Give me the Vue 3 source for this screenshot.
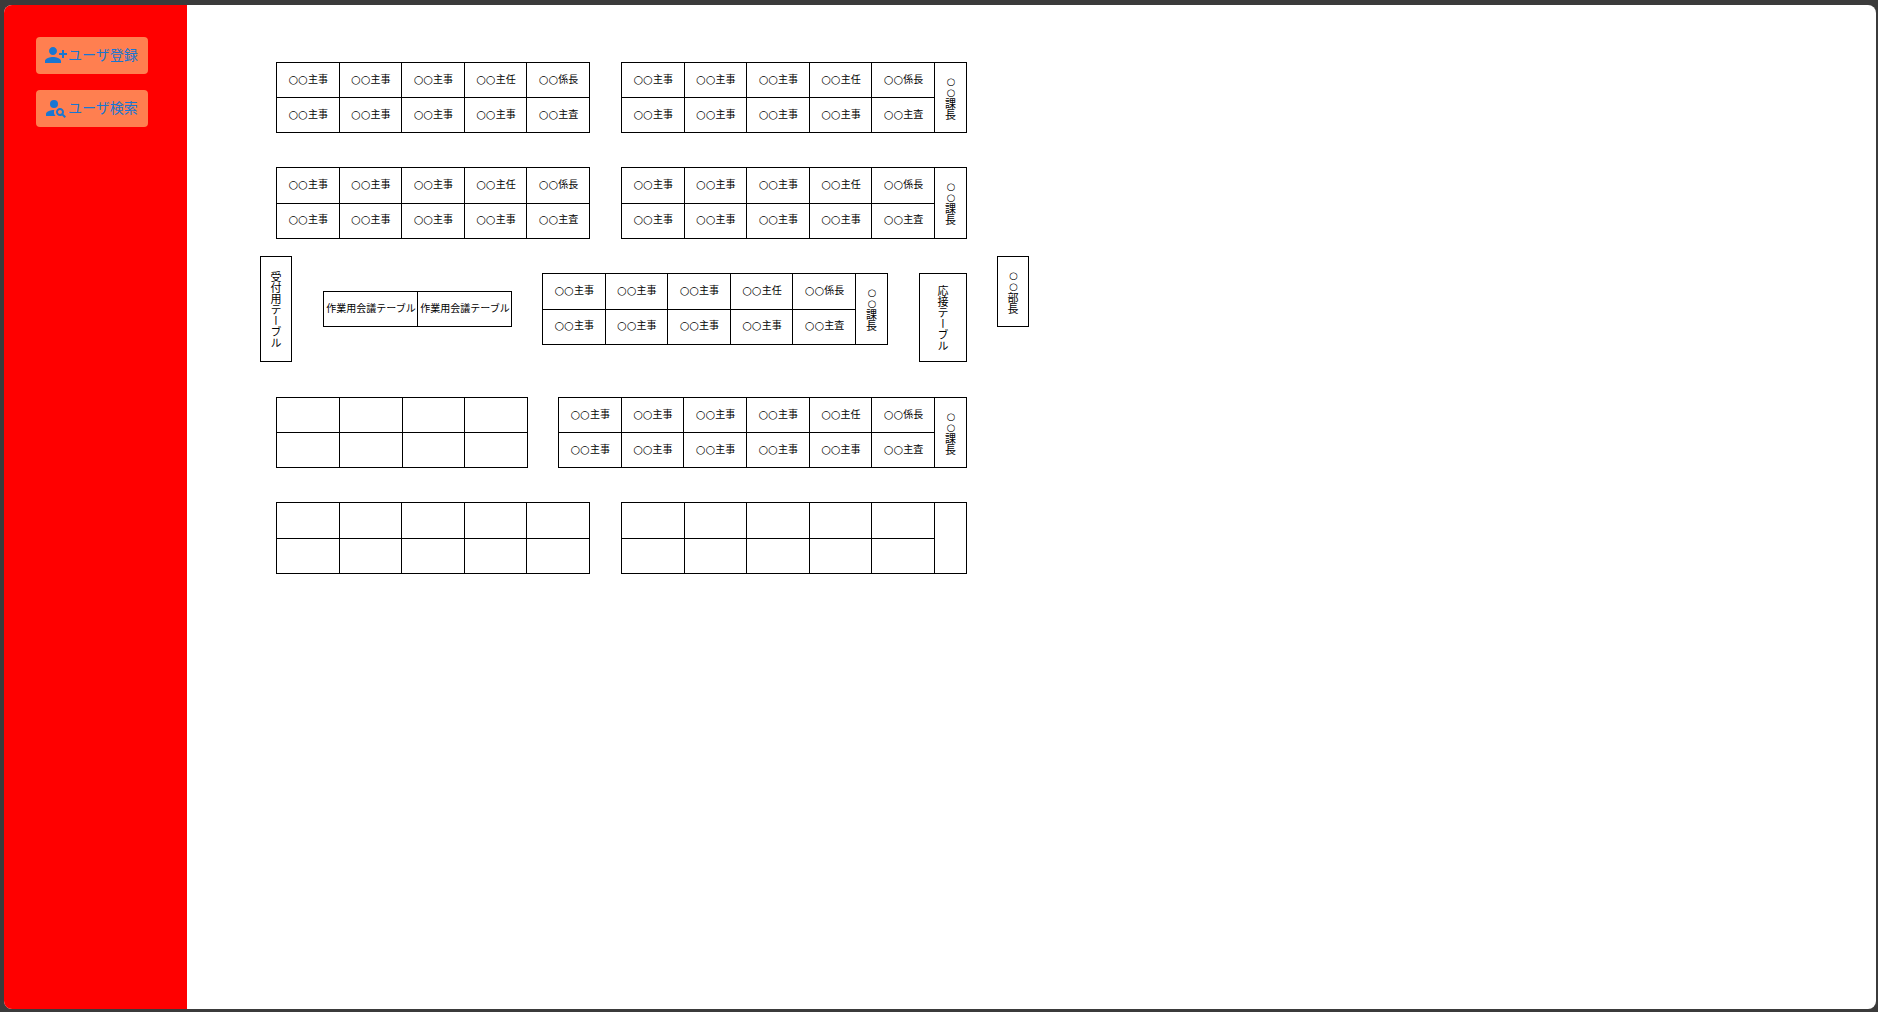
<script setup>
const row = (chief, others) => [...Array(others).fill('○○主事'), ...chief]
const team = (plain) => [
  ...row(['○○主任', '○○係長'], plain),
  ...row(['○○主事', '○○主査'], plain),
]
const blank = (n) => Array(n).fill('')

// x, y, w, h: placement on the floor canvas; cols: desk columns; head: desk at the end of the island
const islands = [
  { x: 89, y: 57, w: 314, h: 71, cols: 5, desks: team(3) },
  { x: 434, y: 57, w: 346, h: 71, cols: 5, desks: team(3), head: '○○課長' },
  { x: 89, y: 162, w: 314, h: 72, cols: 5, desks: team(3) },
  { x: 434, y: 162, w: 346, h: 72, cols: 5, desks: team(3), head: '○○課長' },
  { x: 73, y: 251, w: 32, h: 106, cols: 0, desks: [], head: '受付用テーブル' },
  { x: 136, y: 286, w: 189, h: 36, cols: 2, desks: ['作業用会議テーブル', '作業用会議テーブル'] },
  { x: 355, y: 268, w: 346, h: 72, cols: 5, desks: team(3), head: '○○課長' },
  { x: 732, y: 268, w: 48, h: 89, cols: 0, desks: [], head: '応接テーブル' },
  { x: 810, y: 251, w: 32, h: 71, cols: 0, desks: [], head: '○○部長' },
  { x: 89, y: 392, w: 252, h: 71, cols: 4, desks: blank(8) },
  { x: 371, y: 392, w: 409, h: 71, cols: 6, desks: team(4), head: '○○課長' },
  { x: 89, y: 497, w: 314, h: 72, cols: 5, desks: blank(10) },
  { x: 434, y: 497, w: 346, h: 72, cols: 5, desks: blank(10), head: '' },
]

const place = (i) => ({
  left: `${i.x}px`,
  top: `${i.y}px`,
  width: `${i.w}px`,
  height: `${i.h}px`,
})
const deskArea = (i) => ({
  gridTemplateColumns: `repeat(${i.cols}, 1fr)`,
})

// A label is an anonymised name (the rings) followed by the job title
const rings = (label) => label.match(/^○*/)[0]
const title = (label) => label.replace(/^○*/, '')
</script>

<template>
  <div class="frame">
    <div class="window">
      <nav class="sidebar">
        <button type="button" class="action">
          <svg class="icon" viewBox="0 0 24 24" aria-hidden="true">
            <path d="M13 8c0-2.21-1.79-4-4-4S5 5.79 5 8s1.79 4 4 4 4-1.79 4-4zm2 2v2h3v3h2v-3h3v-2h-3V7h-2v3h-3zM1 18v2h16v-2c0-2.66-5.33-4-8-4s-8 1.34-8 4z" />
          </svg>
          <span>ユーザ登録</span>
        </button>
        <button type="button" class="action">
          <svg class="icon" viewBox="0 0 24 24" aria-hidden="true">
            <circle cx="10" cy="8" r="4" />
            <path d="M10.35 14.01C7.62 13.91 2 15.27 2 18v2h9.54c-2.47-2.76-1.23-5.89-1.19-5.99zM19.43 18.02c.36-.59.57-1.28.57-2.02 0-2.21-1.79-4-4-4s-4 1.79-4 4 1.79 4 4 4c.74 0 1.43-.22 2.02-.57L20.59 22 22 20.59l-2.57-2.57zM16 18c-1.1 0-2-.9-2-2s.9-2 2-2 2 .9 2 2-.9 2-2 2z" />
          </svg>
          <span>ユーザ検索</span>
        </button>
      </nav>
      <main class="floor">
        <section v-for="(island, n) in islands" :key="n" class="island" :style="place(island)">
          <div v-if="island.cols" class="desks" :style="deskArea(island)">
            <div v-for="(desk, d) in island.desks" :key="d" class="desk">
              <span class="label"><span class="rings">{{ rings(desk) }}</span>{{ title(desk) }}</span>
            </div>
          </div>
          <div v-if="island.head !== undefined" class="desk head">
            <span class="label"><span class="rings">{{ rings(island.head) }}</span>{{ title(island.head) }}</span>
          </div>
        </section>
      </main>
    </div>
  </div>
</template>

<style>
body {
  margin: 0;
  background: #3b3b3b;
}
</style>

<style scoped>
.frame {
  box-sizing: border-box;
  min-height: 100vh;
  padding: 5px 2px 3px 4px;
  display: flex;
  background: #3b3b3b;
  font-family: "Noto Sans CJK JP", "Noto Sans", sans-serif;
}

.window {
  flex: 1;
  display: flex;
  overflow: hidden;
  border-radius: 8px;
  background: #fff;
}

.sidebar {
  box-sizing: border-box;
  flex: none;
  width: 183px;
  padding: 32px;
  display: flex;
  flex-direction: column;
  align-items: flex-start;
  gap: 16px;
  background: #f00;
}

.action {
  display: flex;
  align-items: flex-start;
  padding: 6px 10px 7px 8px;
  border: 0;
  border-radius: 4px;
  background: #ff7f50;
  color: #1976d2;
  font-family: inherit;
  font-size: 14px;
  font-weight: 400;
  line-height: 22px;
  white-space: nowrap;
  cursor: pointer;
}

.icon {
  width: 24px;
  height: 24px;
  fill: currentColor;
}

.floor {
  position: relative;
  flex: 1;
  min-width: 0;
}

.island {
  position: absolute;
  box-sizing: border-box;
  display: flex;
  border-top: 1px solid #000;
  border-left: 1px solid #000;
}

.desks {
  flex: 1;
  display: grid;
  grid-auto-rows: 1fr;
}

.desk {
  box-sizing: border-box;
  min-width: 0;
  padding: 0 0 2px 1px;
  display: flex;
  align-items: center;
  justify-content: center;
  border-right: 1px solid #000;
  border-bottom: 1px solid #000;
  color: #000;
  font-size: 10px;
  line-height: 12px;
  white-space: nowrap;
}

.rings {
  font-family: "DejaVu Sans", sans-serif;
  font-size: 11px;
}

.head {
  flex: 1;
  padding: 0;
  font-size: 11px;
  writing-mode: vertical-rl;
}

.desks + .head {
  flex: 0 0 32px;
}

.head .rings {
  font-size: 10px;
}
</style>
